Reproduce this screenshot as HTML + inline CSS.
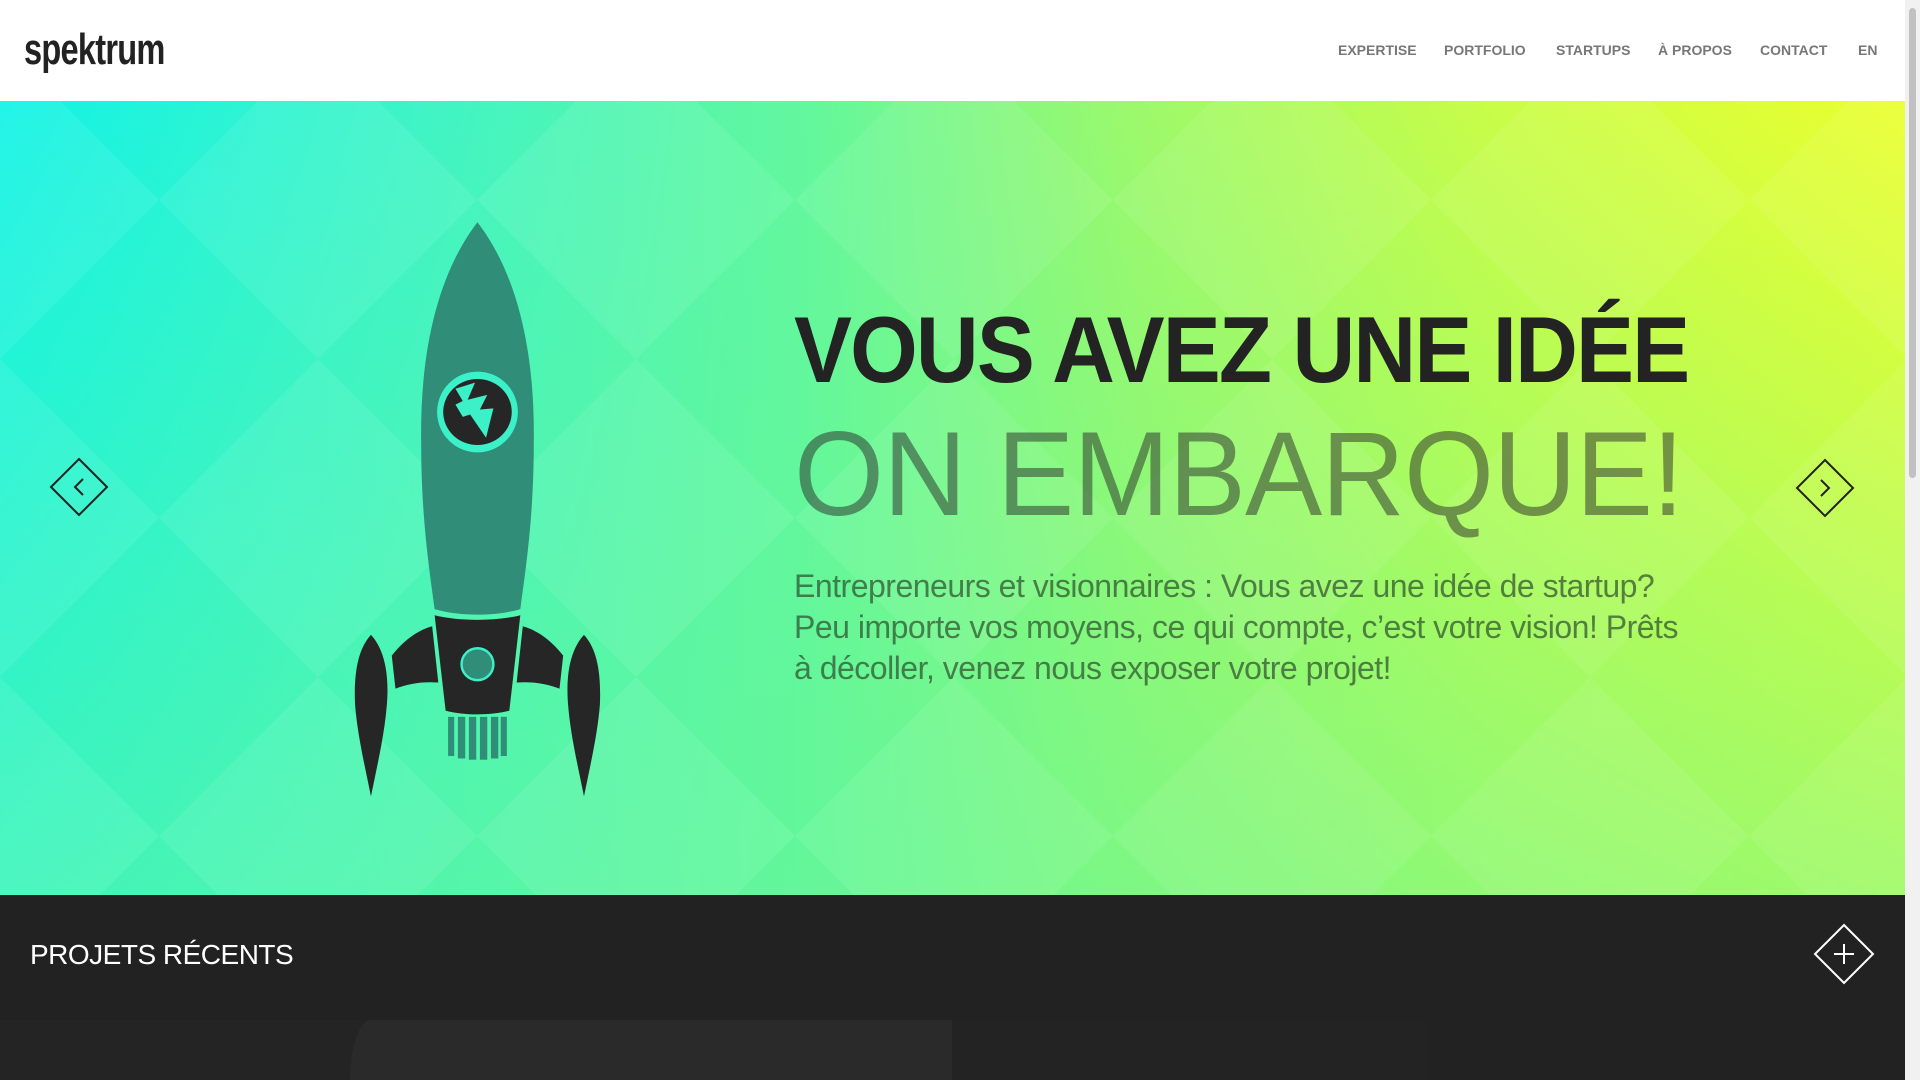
<!DOCTYPE html>
<html><head><meta charset="utf-8"><style>
*{margin:0;padding:0;box-sizing:border-box}
body{width:1920px;height:1080px;overflow:hidden;background:#fff;font-family:"Liberation Sans",sans-serif;position:relative}
#hdr{position:absolute;left:0;top:0;width:1905px;height:101px;background:#fff}
#logo{position:absolute;left:24px;top:25px;font:bold 44px "Liberation Sans",sans-serif;color:#222;letter-spacing:-1px;transform:scaleX(0.74);transform-origin:left top}
.nav{position:absolute;top:42px;font:bold 14px "Liberation Sans",sans-serif;color:#777;letter-spacing:0}
#hero{position:absolute;left:0;top:101px;width:1905px;height:794px;overflow:hidden;
background:linear-gradient(90deg,#12f3e6 0%,#3ff4c6 22%,#62f79e 42%,#9ef96a 60%,#c8fd48 78%,#eaff2e 100%)}
#shade{position:absolute;inset:0;background:linear-gradient(180deg,rgba(90,245,160,0) 0%,rgba(100,246,150,0.55) 100%)}
h1{position:absolute;left:794px;top:296px;font:bold 94px "Liberation Sans",sans-serif;color:#232323;letter-spacing:-2px;white-space:nowrap;transform:scaleX(0.925);transform-origin:left}
h2{position:absolute;left:794px;top:405px;font:120px "Liberation Sans",sans-serif;color:rgba(40,40,40,0.5);white-space:nowrap;letter-spacing:-1px;transform:scaleX(0.965);transform-origin:left}
p.lead{position:absolute;left:794px;top:566px;width:905px;font:32px/41px "Liberation Sans",sans-serif;color:rgba(40,70,40,0.68);letter-spacing:-0.5px}
#dark{position:absolute;left:0;top:895px;width:1905px;height:125px;background:#222}
#dark .t{position:absolute;left:30px;top:44px;font:28px "Liberation Sans",sans-serif;color:#fff;letter-spacing:-0.5px}
.tile{position:absolute;top:1020px;height:60px}
#sb{position:absolute;left:1905px;top:0;width:15px;height:1080px;background:#f1f1f1}
#sb div{position:absolute;left:4px;top:8px;width:7px;height:470px;border-radius:4px;background:#c1c1c1}
</style></head><body>
<div id="hdr">
<div id="logo">spektrum</div>
<div class="nav" style="left:1338px">EXPERTISE</div>
<div class="nav" style="left:1444px">PORTFOLIO</div>
<div class="nav" style="left:1556px">STARTUPS</div>
<div class="nav" style="left:1658px">À PROPOS</div>
<div class="nav" style="left:1760px">CONTACT</div>
<div class="nav" style="left:1858px">EN</div>
</div>
<div id="hero">
<div id="shade"></div>
<svg width="1905" height="794" style="position:absolute;left:0;top:0">
<defs><pattern id="dp" width="318" height="318" patternUnits="userSpaceOnUse" x="-159" y="-60">
<polygon points="159,0 318,159 159,318 0,159" fill="rgba(255,255,255,0.07)"/>
</pattern></defs>
<rect width="1905" height="794" fill="url(#dp)"/>
</svg>
<svg width="1905" height="794" viewBox="0 82 1556 648.5" style="position:absolute;left:0;top:0">
<path d="M390,181 C420,220 437,280 436,360 C436,420 430,460 425,497 C405,503 375,503 355,497 C350,460 344,420 344,360 C343,280 360,220 390,181Z" fill="#2f8d78"/>
<circle cx="390" cy="336" r="33" fill="#3cf0c8"/>
<ellipse cx="390" cy="336" rx="28" ry="27" fill="#262626"/>
<path d="M372,317 L388,312 L382,326 L398,322 L392,334 L403,333 L397,357 L384,338 L378,340 L372,330 L378,327Z" fill="#3cf0c8"/>
<path d="M355,502 C375,507 405,507 425,502 L416,580 C400,584 380,584 364,580Z" fill="#262626"/>
<circle cx="390" cy="542" r="13" fill="#2f8d78" stroke="#3cf0c8" stroke-width="2"/>
<path d="M320,535 C330,522 342,514 353,511 L358,557 C345,556 333,558 323,562Z" fill="#262626"/>
<path d="M460,535 C450,522 438,514 427,511 L422,557 C435,556 447,558 457,562Z" fill="#262626"/>
<path d="M303,518 C292,530 289,550 290,575 C292,600 298,625 303,650 C308,625 314,600 316,575 C318,550 314,530 303,518Z" fill="#262626"/>
<path d="M477,518 C466,530 462,550 464,575 C466,600 472,625 477,650 C482,625 488,600 490,575 C491,550 488,530 477,518Z" fill="#262626"/>
<g fill="#2f8d78"><rect x="366" y="585" width="5" height="32"/><rect x="374" y="585" width="6" height="34"/><rect x="383" y="585" width="6" height="35"/><rect x="392" y="585" width="6" height="35"/><rect x="401" y="585" width="6" height="34"/><rect x="409" y="585" width="5" height="32"/></g>
</svg>
<svg width="60" height="60" style="position:absolute;left:49px;top:356px"><polygon points="30,2 58,30 30,58 2,30" fill="none" stroke="#222" stroke-width="2"/><polyline points="34,22 26,30 34,38" fill="none" stroke="#222" stroke-width="2"/></svg>
<svg width="60" height="60" style="position:absolute;left:1795px;top:357px"><polygon points="30,2 58,30 30,58 2,30" fill="none" stroke="#222" stroke-width="2"/><polyline points="26,22 34,30 26,38" fill="none" stroke="#222" stroke-width="2"/></svg>
</div>
<h1>VOUS AVEZ UNE IDÉE</h1>
<h2>ON EMBARQUE!</h2>
<p class="lead">Entrepreneurs et visionnaires : Vous avez une idée de startup? Peu importe vos moyens, ce qui compte, c’est votre vision! Prêts à décoller, venez nous exposer votre projet!</p>
<div id="dark"><div class="t">PROJETS RÉCENTS</div>
<svg width="62" height="62" style="position:absolute;left:1813px;top:28px"><polygon points="31,2 60,31 31,60 2,31" fill="none" stroke="#fff" stroke-width="2"/><path d="M31,21V41M21,31H41" stroke="#fff" stroke-width="2"/></svg>
</div>
<div class="tile" style="left:0;width:952px;background:#242424"></div>
<div class="tile" style="left:350px;width:602px;background:#2a2a2a;border-top-left-radius:70px 200px"></div>
<div class="tile" style="left:952px;width:476px;background:#232323"></div>
<div class="tile" style="left:1428px;width:477px;background:#222"></div>
<div id="sb"><div></div></div>
</body></html>
